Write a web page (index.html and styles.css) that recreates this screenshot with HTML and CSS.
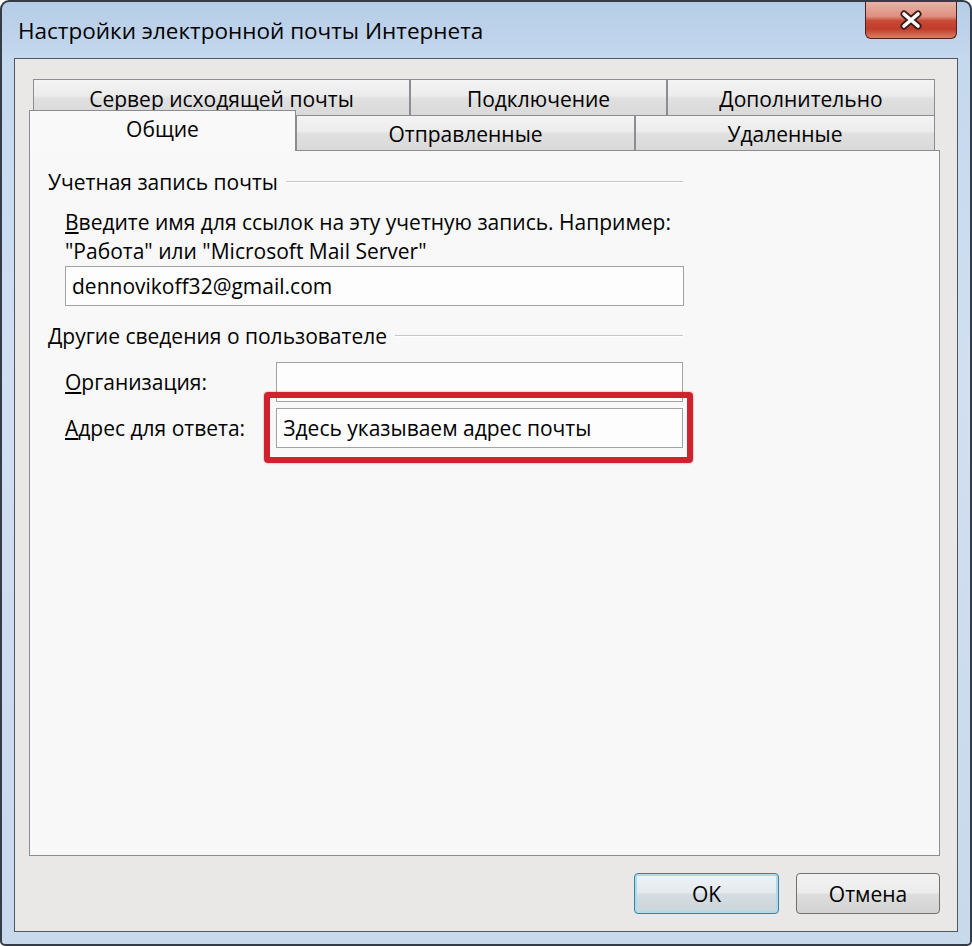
FILE: index.html
```html
<!DOCTYPE html>
<html lang="ru">
<head>
    <meta charset="UTF-8">
    <title>Настройки электронной почты Интернета</title>
    <link rel="stylesheet" href="styles.css">
</head>
<body>

    <div class="window">
        <div class="titlebar">
            <span class="title">Настройки электронной почты Интернета</span>
            <button class="close-btn" title="Закрыть">
                <svg width="28" height="20" viewBox="0 0 28 20">
                    <path d="M7 4 L21 16 M21 4 L7 16" stroke="#3a1c18" stroke-width="7" stroke-linecap="round" fill="none"/>
                    <path d="M7 4 L21 16 M21 4 L7 16" stroke="#ffffff" stroke-width="3.6" stroke-linecap="round" fill="none"/>
                </svg>
            </button>
        </div>

        <div class="client">
            <div class="tab-row top-row">
                <div class="tab tab-server">Сервер исходящей почты</div>
                <div class="tab tab-conn">Подключение</div>
                <div class="tab tab-extra">Дополнительно</div>
            </div>
            <div class="tab-row bottom-row">
                <div class="tab tab-general active">Общие</div>
                <div class="tab tab-sent">Отправленные</div>
                <div class="tab tab-deleted">Удаленные</div>
            </div>

            <div class="panel">
                <div class="group">
                    <div class="group-title">Учетная запись почты</div>
                    <div class="group-body">
                        <p class="hint"><u>В</u>ведите имя для ссылок на эту учетную запись. Например:<br>"Работа" или "Microsoft Mail Server"</p>
                        <div class="field field-wide">dennovikoff32@gmail.com</div>
                    </div>
                </div>

                <div class="group group-other">
                    <div class="group-title">Другие сведения о пользователе</div>
                    <div class="group-body">
                        <div class="form-row">
                            <span class="label"><u>О</u>рганизация:</span>
                            <div class="field field-short"></div>
                        </div>
                        <div class="form-row reply-row">
                            <span class="label"><u>А</u>дрес для ответа:</span>
                            <div class="field field-short">Здесь указываем адрес почты</div>
                            <div class="highlight"></div>
                        </div>
                    </div>
                </div>
            </div>

            <div class="buttons">
                <button class="btn btn-ok">OK</button>
                <button class="btn btn-cancel">Отмена</button>
            </div>
        </div>
    </div>

</body>
</html>
```

FILE: styles.css
```css
body {
    margin: 0;
    background-color: #fff;
    font-family: "Open Sans", "Noto Sans", sans-serif;
    font-size: 21px;
    color: #000;
}

.window {
    width: 972px;
    height: 946px;
    box-sizing: border-box;
    border: 2px solid #353c47;
    border-radius: 9px 9px 5px 5px;
    background: linear-gradient(#b6cde7, #c4d8ee 6%, #d0e0f1 40%, #c8d9ec);
    display: flex;
    flex-direction: column;
    overflow: hidden;
}

.titlebar {
    height: 56px;
    flex-shrink: 0;
    display: flex;
    justify-content: space-between;
    align-items: flex-start;
    padding: 0 13px 0 16px;
}

.title {
    padding-top: 15px;
    line-height: 28px;
    font-size: 22.5px;
}

.close-btn {
    width: 92px;
    height: 37px;
    padding: 0;
    border: 1px solid #4b211d;
    border-top: none;
    border-radius: 0 0 6px 6px;
    background: linear-gradient(#eab2a6, #de8f80 40%, #c94a37 52%, #c03d2a 75%, #dc7e64);
    display: flex;
    align-items: center;
    justify-content: center;
}

.client {
    flex: 1;
    margin: 0 12px 12px;
    border: 1px solid #4f5761;
    background-color: #eae7e7;
    padding: 20px 17px 17px 14px;
    display: flex;
    flex-direction: column;
}

/* вкладки */

.tab-row {
    display: flex;
}

.top-row {
    margin-left: 4px;
    height: 36px;
}

.bottom-row {
    margin-top: -5px;
    height: 40px;
    align-items: flex-end;
}

.tab {
    box-sizing: border-box;
    height: 35px;
    border: 1px solid #8b8d93;
    border-bottom: none;
    background: linear-gradient(#f4f4f4, #ececec 45%, #e0e0e0 52%, #d9d9d9);
    display: flex;
    align-items: center;
    justify-content: center;
    padding-top: 1px;
}

.top-row .tab {
    height: 36px;
    padding-top: 2px;
}

.tab-server { width: 377px; }
.tab-conn { width: 257px; }
.tab-extra { width: 268px; }
.tab-sent { width: 339px; }
.tab-deleted { width: 300px; }

.tab-general {
    width: 267px;
}

.tab.active {
    position: relative;
    z-index: 1;
    height: 41px;
    margin-bottom: -1px;
    background: #f9f9f9;
    align-items: flex-start;
    padding-top: 4px;
}

.panel {
    height: 706px;
    flex-shrink: 0;
    box-sizing: border-box;
    border: 1px solid #8b8d93;
    background-color: #f8f8f8;
    padding: 18px 0 0 18px;
}

/* группы */

.group {
    width: 635px;
}

.group-other {
    margin-top: 17px;
}

.group-title {
    display: flex;
    align-items: center;
    gap: 8px;
    line-height: 26px;
    white-space: nowrap;
}

.group-title::after {
    content: "";
    flex: 1;
    border-top: 1px solid #c6c6c6;
    border-bottom: 1px solid #fff;
}

.group-body {
    padding-left: 17px;
}

.hint {
    margin: 13px 0 0;
    line-height: 29px;
    white-space: nowrap;
}

.field {
    box-sizing: border-box;
    height: 40px;
    border: 1px solid #a2a2a2;
    background-color: #fdfdfd;
    padding-left: 6px;
    display: flex;
    align-items: center;
}

.field-wide {
    width: 619px;
}

.field-short {
    width: 408px;
}

.form-row {
    display: flex;
    align-items: center;
    margin-top: 13px;
}

.reply-row {
    position: relative;
    margin-top: 6px;
}

.label {
    width: 212px;
}

.highlight {
    position: absolute;
    left: 199px;
    top: -16px;
    width: 429px;
    height: 71px;
    box-sizing: border-box;
    border: 6px solid #d0222e;
    border-radius: 4px;
    box-shadow: 0 0 2px rgba(120, 0, 0, 0.5);
}

/* кнопки */

.buttons {
    margin-top: 17px;
    display: flex;
    justify-content: flex-end;
    gap: 17px;
}

.btn {
    height: 41px;
    width: 144px;
    font: inherit;
    color: #000;
    border: 1px solid #707070;
    border-radius: 4px;
    background: linear-gradient(#f3f3f3, #ececec 48%, #dedede 52%, #d2d2d2);
}

.btn-ok {
    width: 145px;
    border-color: #3f7fa6;
    box-shadow: inset 0 0 0 2px #a9dcee;
    background: linear-gradient(#eef3f6, #e4eaee 48%, #d5dde2 52%, #cbd4da);
}
```
